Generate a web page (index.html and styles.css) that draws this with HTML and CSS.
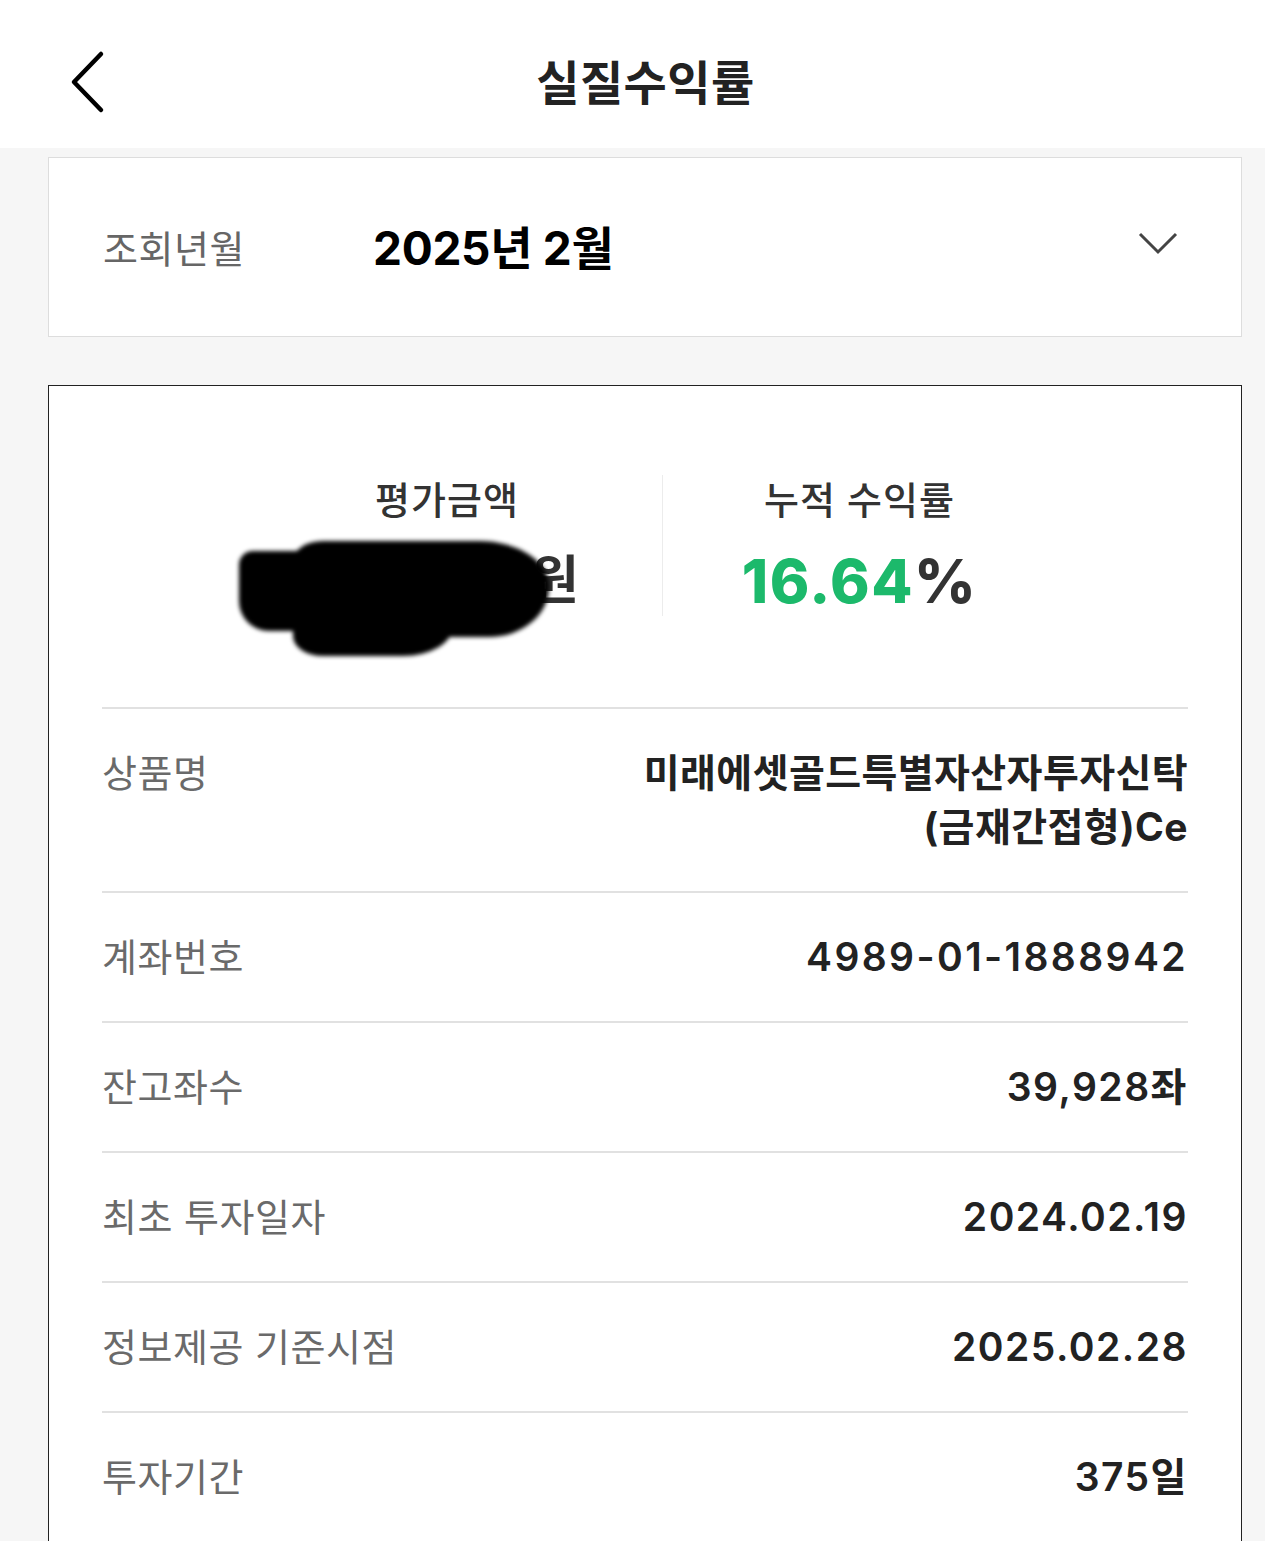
FILE: index.html
```html
<!DOCTYPE html>
<html lang="ko">
<head>
  <meta charset="UTF-8">
  <meta name="viewport" content="width=device-width, initial-scale=1.0">
  <title>실질수익률</title>
  <link rel="stylesheet" href="styles.css">
</head>
<body>
  <header class="top-bar">
    <button class="back-btn" aria-label="뒤로">
      <svg width="40" height="64" viewBox="0 0 40 64">
        <path d="M33 4 L6 32 L33 60" fill="none" stroke="#000" stroke-width="4.5" stroke-linecap="round" stroke-linejoin="round"/>
      </svg>
    </button>
    <h1>실질수익률</h1>
  </header>

  <main class="content">
    <div class="period-box">
      <span class="period-label">조회년월</span>
      <span class="period-value">2025년 2월</span>
      <svg class="chevron" width="42" height="26" viewBox="0 0 42 26">
        <path d="M3 4 L21 22 L39 4" fill="none" stroke="#444" stroke-width="3"/>
      </svg>
    </div>

    <section class="detail-card">
      <div class="summary">
        <div class="summary-col col-amount">
          <p class="summary-label">평가금액</p>
          <p class="summary-value"><span class="hidden-amount"></span>원<span class="mask"></span></p>
        </div>
        <div class="summary-col col-rate">
          <p class="summary-label">누적 수익률</p>
          <p class="summary-value"><span class="rate">16.64</span>%</p>
        </div>
      </div>

      <ul class="info-list">
        <li class="info-row">
          <span class="info-label">상품명</span>
          <span class="info-value name">미래에셋골드특별자산자투자신탁<br>(금재간접형)Ce</span>
        </li>
        <li class="info-row">
          <span class="info-label">계좌번호</span>
          <span class="info-value account">4989-01-1888942</span>
        </li>
        <li class="info-row">
          <span class="info-label">잔고좌수</span>
          <span class="info-value">39,928좌</span>
        </li>
        <li class="info-row">
          <span class="info-label">최초 투자일자</span>
          <span class="info-value">2024.02.19</span>
        </li>
        <li class="info-row">
          <span class="info-label">정보제공 기준시점</span>
          <span class="info-value">2025.02.28</span>
        </li>
        <li class="info-row">
          <span class="info-label">투자기간</span>
          <span class="info-value">375일</span>
        </li>
      </ul>
    </section>
  </main>
</body>
</html>
```

FILE: styles.css
```css
* {
  margin: 0;
  padding: 0;
  box-sizing: border-box;
}

body {
  background: #f6f6f6;
  font-family: Inter, "Noto Sans CJK KR", sans-serif;
  color: #222;
  overflow: hidden;
}

.top-bar {
  height: 148px;
  background: #fff;
  display: flex;
  align-items: center;
  justify-content: center;
  position: relative;
}

.top-bar h1 {
  font-size: 47px;
  font-weight: 700;
  letter-spacing: 0.5px;
  color: #222;
  margin: 10px 0 0 26px;
}

.back-btn {
  position: absolute;
  left: 68px;
  top: 50px;
  border: none;
  background: none;
  display: flex;
}

.content {
  padding: 9px 23px 0 48px;
}

.period-box {
  height: 180px;
  background: #fff;
  border: 1px solid #ddd;
  display: flex;
  align-items: center;
  padding: 0 62px 0 54px;
}

.period-label {
  width: 270px;
  font-size: 38px;
  letter-spacing: 0.5px;
  color: #666;
  margin-top: -2px;
}

.period-value {
  flex: 1;
  font-size: 46px;
  font-weight: 700;
  letter-spacing: -0.3px;
  color: #000;
  margin-top: -4px;
}

.chevron {
  margin-top: -8px;
}

.detail-card {
  margin-top: 48px;
  background: #fff;
  border: 1px solid #222;
  border-bottom: none;
  padding: 89px 53px 0;
  min-height: 1200px;
}

.summary {
  display: flex;
  padding-left: 130px;
  padding-bottom: 91px;
}

.summary-col {
  height: 141px;
  display: flex;
  flex-direction: column;
  align-items: center;
  gap: 21px;
}

.col-amount {
  width: 430px;
}

.col-rate {
  width: 394px;
  border-left: 1px solid #ececec;
}

.summary-label {
  font-size: 38px;
  line-height: 50px;
  letter-spacing: 1px;
  color: #333;
  font-weight: 500;
}

.summary-value {
  font-size: 60px;
  line-height: 70px;
  font-weight: 800;
  letter-spacing: 1.5px;
  color: #333;
  position: relative;
}

.col-amount .summary-value {
  font-size: 52px;
  letter-spacing: 0;
  font-weight: 700;
}

.hidden-amount {
  display: inline-block;
  width: 216px;
}

.rate {
  color: #1cb96b;
}

/* 가림 처리 */
.mask {
  position: absolute;
  left: -22px;
  top: -5px;
  width: 256px;
  height: 96px;
  background: #000;
  border-radius: 30px 70px 60px 30px / 20px 45px 50px 40px;
  filter: blur(2px);
}

.mask::before {
  content: "";
  position: absolute;
  left: -54px;
  top: 10px;
  width: 90px;
  height: 80px;
  background: #000;
  border-radius: 14px 10px 20px 30px;
}

.mask::after {
  content: "";
  position: absolute;
  left: 0;
  top: 50px;
  width: 160px;
  height: 65px;
  background: #000;
  border-radius: 10px 10px 50px 30px / 10px 10px 30px 20px;
}

.info-list {
  list-style: none;
}

.info-row {
  display: flex;
  justify-content: space-between;
  align-items: flex-start;
  padding: 37px 0;
  border-top: 2px solid #e1e1e1;
  line-height: 54px;
}

.info-label {
  font-size: 38px;
  letter-spacing: 0.5px;
  color: #6a6a6a;
  white-space: nowrap;
}

.info-value {
  font-size: 39px;
  font-weight: 600;
  letter-spacing: 1.5px;
  color: #222;
  text-align: right;
}

.info-value.name {
  font-weight: 700;
  letter-spacing: 0.4px;
}

.info-value.account {
  letter-spacing: 2.4px;
}
```
